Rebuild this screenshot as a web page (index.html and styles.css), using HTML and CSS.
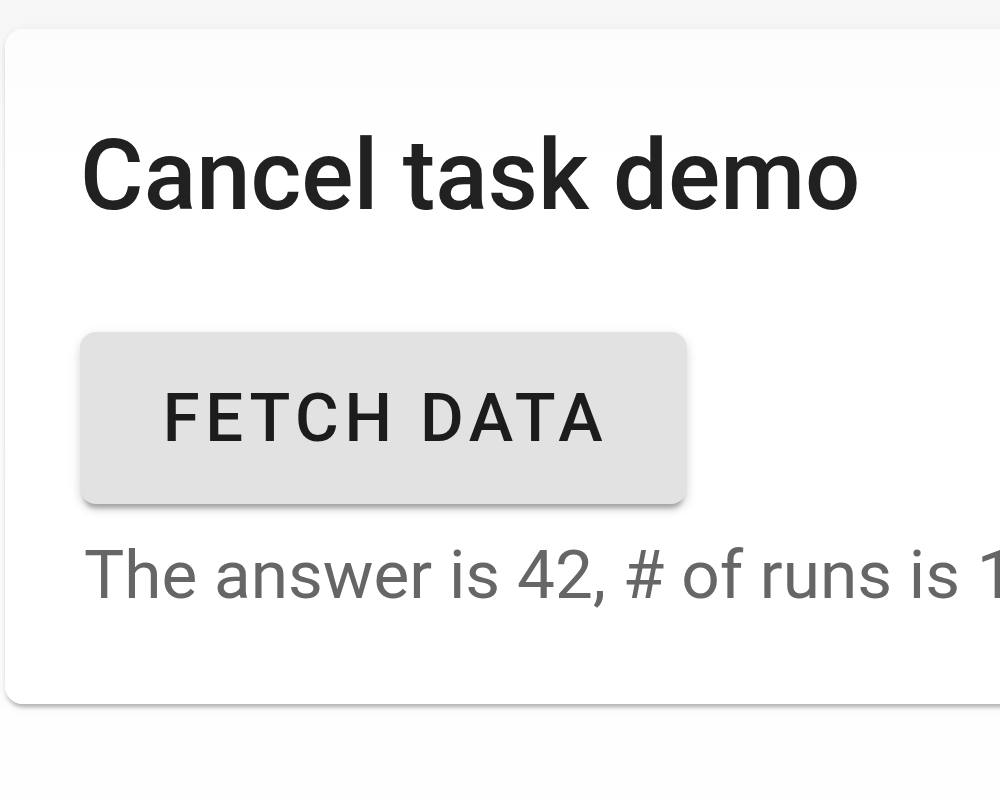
FILE: index.html
```html
<!DOCTYPE html>
<html>
<head>
<meta charset="utf-8">
<link rel="stylesheet" href="styles.css">
</head>
<body>
<div class="card">
  <h1 class="title">Cancel task demo</h1>
  <button class="btn">Fetch data</button>
  <p class="result">The answer is 42, # of runs is 1</p>
</div>
</body>
</html>
```
FILE: styles.css
```css
html, body {
  margin: 0;
  padding: 0;
  overflow: hidden;
  width: 1000px;
  height: 800px;
}
body {
  background: linear-gradient(#f7f7f7 0, #f7f7f7 26px, #fdfdfd 120px, #fefefe 100%);
  font-family: Roboto, "Liberation Sans", sans-serif;
  padding-top: 29px;
  padding-left: 5px;
  box-sizing: border-box;
}
.card {
  width: 1200px;
  height: 675px;
  background: linear-gradient(#fcfcfc 0, #fefefe 80px, #ffffff 160px);
  border-radius: 18px;
  box-sizing: border-box;
  padding: 0 0 0 75px;
  box-shadow: 0 6px 4px -3px rgba(0,0,0,0.2), 0 3px 4px 0 rgba(0,0,0,0.1), 0 2px 14px 0 rgba(0,0,0,0.06);
  display: flex;
  flex-direction: column;
  align-items: flex-start;
}
.title {
  margin: 99px 0 0 0;
  font-size: 97.5px;
  font-weight: 500;
  line-height: 96px;
  color: #212121;
  letter-spacing: 0;
}
.btn {
  margin-top: 108px;
  height: 172px;
  width: 607px;
  border: none;
  border-radius: 16px;
  background: #e2e2e2;
  color: #1c1c1c;
  font-family: Roboto, "Liberation Sans", sans-serif;
  font-size: 67px;
  font-weight: 500;
  letter-spacing: 0.085em;
  text-transform: uppercase;
  padding: 0 0 0 4px;
  box-shadow: 0 8px 4px -4px rgba(0,0,0,0.25), 0 6px 8px 0 rgba(0,0,0,0.1), 0 3px 14px 0 rgba(0,0,0,0.08);
}
.result {
  margin: 31px 0 0 4px;
  font-size: 67.5px;
  line-height: 80px;
  color: #666666;
  font-weight: 400;
  white-space: nowrap;
}
```
